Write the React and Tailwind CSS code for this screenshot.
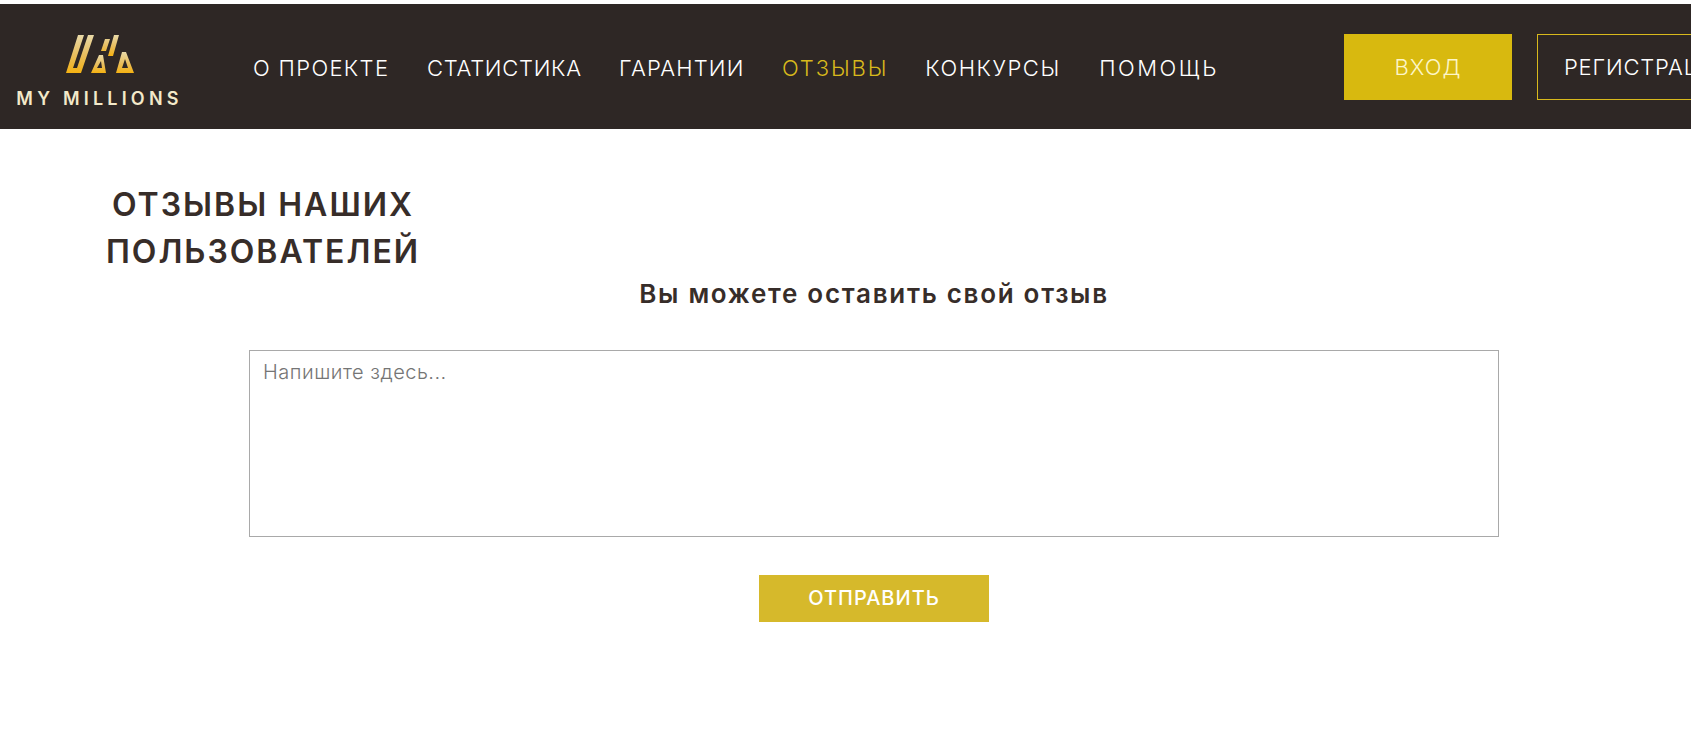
const navItems = [
  { label: 'О ПРОЕКТЕ', w: 'w-[136px] tracking-[1.35px]' },
  { label: 'СТАТИСТИКА', w: 'w-[154px] tracking-[0.7px]' },
  { label: 'ГАРАНТИИ', w: 'w-[125px] tracking-[1.15px]' },
  { label: 'ОТЗЫВЫ', w: 'w-[105px] tracking-[1.9px]', active: true },
  { label: 'КОНКУРСЫ', w: 'w-[136px] tracking-[1.55px]' },
  { label: 'ПОМОЩЬ', w: 'w-[120px] tracking-[2.5px]' },
];

const Logo = () => (
  <svg width="68" height="38" viewBox="0 0 68 38" fill="none">
    <defs>
      <linearGradient id="gold" x1="0" y1="0" x2="0" y2="1">
        <stop offset="0" stopColor="#e8d9a8" />
        <stop offset="0.55" stopColor="#e9bd5a" />
        <stop offset="1" stopColor="#f5b212" />
      </linearGradient>
    </defs>
    <path d="M12 0h6L7 33h4L22 0h6L15 38H0Z" fill="url(#gold)" />
    <path d="M39 4h5l-4 12h-5ZM48 0h5l-6 21h-5Z" fill="url(#gold)" />
    <path d="M33 20h4l3 18H25ZM31 33h5l-1-7Z" fill="url(#gold)" fillRule="evenodd" />
    <path d="M50 38l6-21h4l8 21ZM56 33h6l-3-9Z" fill="url(#gold)" fillRule="evenodd" />
  </svg>
);

export default function App() {
  return (
    <div className="h-[756px] overflow-hidden bg-white pt-1 font-['Inter','Liberation_Sans',sans-serif] text-[#372d29]">
      <header className="flex h-[125px] items-center overflow-hidden bg-[#2e2725]">
        <div className="flex w-[198px] shrink-0 flex-col items-center pt-[11px] pl-[1px]">
          <Logo />
          <span className="mt-[16px] text-[18px] leading-[20px] font-semibold tracking-[4.2px] whitespace-nowrap text-[#f3e9c9]">
            MY MILLIONS
          </span>
        </div>
        <nav className="ml-[55px] flex w-[1091px] shrink-0 items-center gap-[38px] pt-[4px]">
          {navItems.map((item) => (
            <a
              key={item.label}
              className={`${item.w} text-center text-[22px] font-light whitespace-nowrap ${item.active ? 'text-[#d8b91c]' : 'text-white'}`}
            >
              {item.label}
            </a>
          ))}
        </nav>
        <a className="flex h-[66px] w-[168px] shrink-0 items-center justify-center bg-[#d8b90f] pt-[1px] text-[22px] font-light tracking-[1px] text-[#fdf6c8]">
          ВХОД
        </a>
        <a className="ml-[25px] flex h-[66px] w-[220px] shrink-0 items-center border border-[#d8b91c] pt-[1px] pl-[26px] text-[22px] font-light tracking-[0.8px] whitespace-nowrap text-white">
          РЕГИСТРАЦИЯ
        </a>
      </header>

      <main>
        <h1 className="mt-[52px] w-[526px] text-center text-[32px] leading-[47px] font-semibold tracking-[2px]">
          ОТЗЫВЫ НАШИХ
          <br />
          ПОЛЬЗОВАТЕЛЕЙ
        </h1>
        <div className="ml-[249px] flex w-[1250px] flex-col items-center">
          <h2 className="mt-[1px] text-[26px] leading-[36px] font-semibold tracking-[1.7px]">Вы можете оставить свой отзыв</h2>
          <textarea
            placeholder="Напишите здесь..."
            className="mt-[38px] h-[187px] w-full resize-none border border-[#a9a9a9] px-[13px] py-[6px] text-[20px] font-light tracking-[0.5px] outline-none placeholder:text-[#757575]"
          />
          <button className="mt-[38px] h-[47px] w-[230px] bg-[#d6b92b] pb-[2px] text-[20px] font-medium tracking-[1px] text-white">
            ОТПРАВИТЬ
          </button>
        </div>
      </main>
    </div>
  );
}
